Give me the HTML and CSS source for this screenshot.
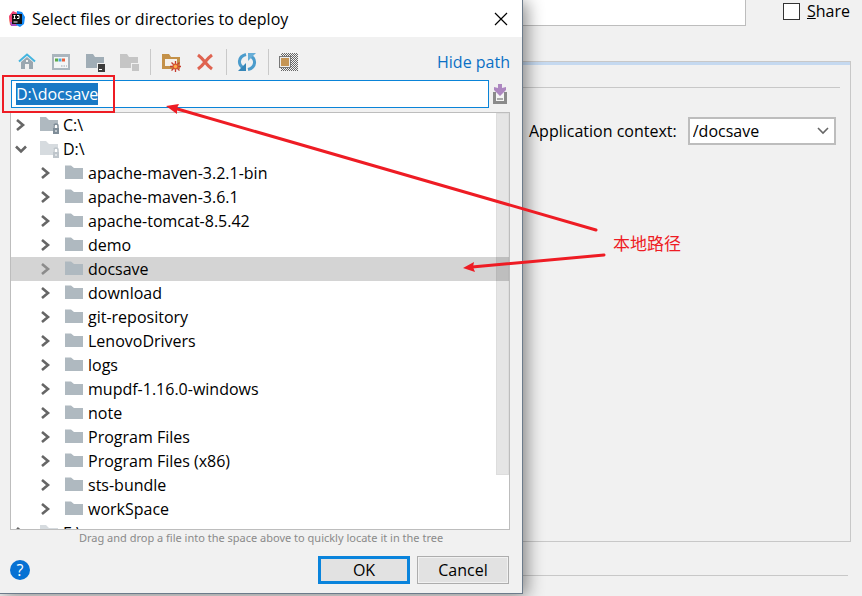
FILE: index.html
```html
<!DOCTYPE html>
<html lang="en">
<head>
<meta charset="utf-8">
<title>Select files or directories to deploy</title>
<link rel="stylesheet" href="styles.css">
</head>
<body>
<svg class="defs" aria-hidden="true">
  <symbol id="right" viewBox="0 0 12 14"><path d="M2 2l6 5-6 5" fill="none" stroke="currentColor" stroke-width="2.6"/></symbol>
  <symbol id="down" viewBox="0 0 12 14"><path d="M1 4.500l5 5 5-5" fill="none" stroke="currentColor" stroke-width="2.600"/></symbol>
  <symbol id="folder" viewBox="0 0 20 20"><path d="M0 2.500h6l3 2.500h9v11H0z" fill="#afb9c0"/></symbol>
  <symbol id="drive" viewBox="0 0 20 20"><path d="M0 2h6l3 3h9v5h-5v6H0z" fill="#afb9c0"/><path d="M14 13v-2q0-2 2-2t2 2v2" fill="none" stroke="#7f8d98" stroke-width="1.500"/><path d="M13 13h6v6h-6z" fill="#7f8d98"/><path d="M15.500 15h1v2h-1z" fill="#fff"/></symbol>
</svg>
<main class="screen">
  <section class="dialog" role="dialog" aria-labelledby="title">
    <header class="titlebar">
      <svg class="logo" viewBox="0 0 18 18" aria-hidden="true"><path d="M1 7l4-5 5 1-1 13-7-1z" fill="#f97a45"/><path d="M5 1l4 2-1 5-6 5-1-7z" fill="#ef4478"/><path d="M9 1l5 1 3 5-1 7-4 3-4-2z" fill="#168af5"/><path d="M2 12h4l3 4-6 0z" fill="#ad4fc5"/><path d="M4 4h10v10H4z" fill="#111"/><path d="M5.500 5.500h2M6.500 5.500v3M5.500 8.500h2M9 5.500h2v3H9M5.500 12h4" fill="none" stroke="#fff"/></svg>
      <h1 id="title">Select files or directories to deploy</h1>
      <button class="plain close" aria-label="Close"><svg viewBox="0 0 14 14"><path d="M1 1l12 12M13 1L1 13" stroke="#000" stroke-width="1.200"/></svg></button>
    </header>
    <div class="toolbar">
      <button class="plain tool" aria-label="Home"><svg viewBox="0 0 20 20"><path d="M4 10l6-5 6 5v7h-4v-5H8v5H4z" fill="#9aa7b0"/><path d="M2 9.500l8-7 8 7" fill="none" stroke="#45b5df" stroke-width="2"/><path d="M9 8h2v2H9z" fill="#f1f1f1"/></svg></button>
      <button class="plain tool" aria-label="Project directory"><svg viewBox="0 0 20 20"><path d="M1 2h18v16H1z" fill="#aab5bd"/><path d="M3 5h14v11H3z" fill="#f4f5f6"/><path d="M4 6.500h3v3H4z" fill="#5cab49"/><path d="M7.500 6.500h3v3h-3z" fill="#4eaadb"/><path d="M11 6.500h3v3h-3z" fill="#e9603b"/><path d="M10 14h1.500M12.500 14H14M15 14h1" stroke="#9aa7b0"/></svg></button>
      <button class="plain tool" aria-label="Module directory"><svg viewBox="0 0 20 20"><path d="M1 2h7l2 3h9v6h-7v5H1z" fill="#a0adb6"/><path d="M13 12h7v8h-7z" fill="#3c3c3c"/><path d="M14 17h3v1h-3z" fill="#fff"/></svg></button>
      <button class="plain tool" aria-label="Content root" disabled><svg viewBox="0 0 20 20"><path d="M1 2h7l2 3h9v6h-7v5H1z" fill="#c5c5c5"/><path d="M13 12h7v7h-7z" fill="#c5c5c5"/></svg></button>
      <span class="divider"></span>
      <button class="plain tool" aria-label="New folder"><svg viewBox="0 0 20 20"><path d="M1 2h7l2 3h9v12H1z" fill="#c49148"/><path d="M4 7h12v7H4z" fill="#f5f1eb"/><path d="M14.500 9v11M9 14.500h11M10.500 10.500l8 8M18.500 10.500l-8 8" stroke="#c63b2d" stroke-width="1.300"/><circle cx="14.500" cy="14.500" r="3" fill="#d65a31"/><circle cx="14.500" cy="14.500" r="1.700" fill="#ffad4c"/></svg></button>
      <button class="plain tool" aria-label="Delete"><svg viewBox="0 0 20 20"><path d="M3 3q4 3 7 7t7 7M17 3q-4 3-7 7t-7 7" fill="none" stroke="#df6350" stroke-width="3"/></svg></button>
      <span class="divider"></span>
      <button class="plain tool" aria-label="Refresh"><svg viewBox="0 0 20 20"><path d="M7 16Q2 14 2.500 9T9 2.500M13 4q5 2 4.500 7T11 17.500" fill="none" stroke="#4c9ccc" stroke-width="3"/><path d="M11 1h8l-8 8z" fill="#68aed7"/><path d="M9 19H1l8-8z" fill="#3686b8"/></svg></button>
      <span class="divider"></span>
      <button class="plain tool" aria-label="Show hidden files"><svg viewBox="0 0 20 20"><defs><pattern id="dots" width="2" height="2" patternUnits="userSpaceOnUse"><path d="M0 0h1v1H0zM1 1h1v1H1z" fill="#666"/></pattern></defs><path d="M2 1h17v18H2z" fill="url(#dots)"/><path d="M0 4h12v12H0z" fill="#777"/><path d="M1 5h10v10H1z" fill="#eee"/><path d="M2 6h8v8H2z" fill="#c59555"/></svg></button>
      <a class="hide" href="#path">Hide path</a>
    </div>
    <div class="pathrow">
      <input id="path" class="path" type="text" value="D:\docsave" aria-label="Path" spellcheck="false" autofocus>
      <button class="plain history" aria-label="Path history"><svg viewBox="0 0 16 22"><path d="M1 9h3v9h8V9h3v12H1z" fill="#8b8b8b"/><path d="M4 9h8v9H4z" fill="#f5f5f5"/><path d="M5 15h6v2H5z" fill="#aaa"/><path d="M6 1h4v4l4-1v3l-6 6-6-6V4l4 1z" fill="#ad87c0"/></svg></button>
    </div>
    <div class="treebox">
      <ul class="tree" role="tree"></ul>
      <span class="thumb"></span>
    </div>
    <p class="hint">Drag and drop a file into the space above to quickly locate it in the tree</p>
    <footer class="actions">
      <button class="plain help" aria-label="Help">?</button>
      <button class="btn primary">OK</button>
      <button class="btn">Cancel</button>
    </footer>
  </section>
  <section class="settings">
    <div class="namerow">
      <input class="name" type="text" aria-label="Name">
      <label class="share"><input type="checkbox"><span><u>S</u>hare</span></label>
    </div>
    <div class="panel">
      <hr>
      <div class="context">
        <label for="context">Application context:</label>
        <div class="combo">
          <select id="context"><option>/docsave</option></select>
          <svg viewBox="0 0 12 8" aria-hidden="true"><path d="M1 1l5 5 5-5" fill="none" stroke="#666" stroke-width="1.600"/></svg>
        </div>
      </div>
    </div>
    <hr class="endrule">
  </section>
</main>
<svg class="marks" viewBox="0 0 862 596" aria-hidden="true">
  <path d="M3 76h111v36H3z" fill="none" stroke="#ee1c24" stroke-width="2"/>
  <path d="M596 230L174 108M604 255L472 267" stroke="#ee1c24" stroke-width="3" stroke-linecap="round"/>
  <path d="M166 106l13-2-2 4 0 6zM463 268l11-6-1 5 2 5z" fill="#ee1c24"/>
</svg>
<span class="note" lang="zh-CN">本地路径</span>
<script src="tree.js"></script>
</body>
</html>
```

FILE: styles.css
```css
* { box-sizing: border-box; }
body {
  margin: 0;
  background: #f1f1f1;
  color: #000;
  font: 16px/20px "Open Sans", "Noto Sans CJK SC", sans-serif;
  overflow: hidden;
}
input, select, button { font: inherit; color: inherit; }
svg { display: block; }
.defs { position: absolute; width: 0; height: 0; }
.screen { display: flex; min-height: 100vh; }
.dialog {
  flex: 0 0 523px;
  display: flex;
  flex-direction: column;
  height: calc(100vh - 2px);
  background: #f1f1f1;
  border: solid #6c7b8b;
  border-width: 0 1px 1px 0;
  box-shadow: 4px 2px 16px rgba(0, 0, 0, .45);
  z-index: 1;
}
.plain { padding: 0; border: 0; background: none; flex: none; }
.titlebar {
  display: flex;
  align-items: center;
  height: 37px;
  padding: 0 14px 0 8px;
  background: #fff;
}
.logo { width: 18px; height: 18px; }
h1 { flex: 1; margin: 0 0 0 6px; font-size: 16px; font-weight: 400; }
.close svg { width: 14px; height: 14px; }
.toolbar {
  display: flex;
  align-items: center;
  height: 43px;
  padding: 7px 12px 0 17px;
  gap: 14px;
}
.tool svg { width: 20px; height: 20px; }
.divider { width: 1px; height: 26px; margin: 0 -4px 0 -3px; background: #c9c9c9; }
.hide { margin-left: auto; color: #0b70c5; text-decoration: none; }
.pathrow { display: flex; align-items: center; gap: 3px; padding: 0 14px 0 11px; height: 28px; }
.path {
  flex: 1;
  min-width: 0;
  height: 28px;
  padding: 3px 4px;
  border: 1px solid #0a84d8;
  outline: 0;
  background: #fff;
  line-height: 20px;
}
.path::selection { background: #1979c5; color: #fff; }
.history svg { width: 16px; height: 22px; }
.treebox {
  position: relative;
  flex: 1;
  min-height: 0;
  margin: 4px 12px 0 10px;
  overflow: hidden;
  border: 1px solid #bdbdbd;
  background: #fff;
}
.tree { margin: 0; padding: 0; list-style: none; }
.row { display: flex; align-items: center; height: 24px; padding-left: 4px; white-space: nowrap; }
.child { padding-left: 29px; }
.selected { background: #d4d4d4; }
.twisty { width: 12px; height: 14px; margin-right: 13px; color: #666; }
.selected .twisty { color: #8c8c8c; }
.icon { width: 20px; height: 20px; margin-right: 3px; }
.faded .icon { opacity: .5; }
.thumb {
  position: absolute;
  top: 0;
  right: 0;
  width: 13px;
  height: 87%;
  border: 1px solid rgba(0, 0, 0, .03);
  background: rgba(0, 0, 0, .1);
}
.hint {
  margin: 0;
  font: 11px/16px "Noto Sans", sans-serif;
  text-align: center;
  color: #8a8a8a;
}
.actions { display: flex; align-items: center; gap: 7px; padding: 10px 13px 9px 10px; }
.help {
  width: 20px;
  height: 20px;
  margin-right: auto;
  border-radius: 50%;
  background: #0671d3;
  color: #fff;
}
.btn {
  width: 92px;
  height: 28px;
  padding: 0;
  border: 1px solid #adadad;
  box-shadow: inset 0 0 0 1px #f1f1f1;
  background: #e2e2e2;
}
.primary { border: 3px solid #0a84dc; box-shadow: none; }
.settings { flex: 1; min-width: 0; display: flex; flex-direction: column; }
.namerow { display: flex; height: 26px; padding-right: 12px; }
.name { flex: 1; min-width: 0; border: solid #bdbdbd; border-width: 0 1px 1px 0; background: #fff; }
.share { display: flex; align-items: center; height: 22px; gap: 7px; margin-left: 37px; }
.share input { appearance: none; width: 17px; height: 17px; margin: 0; border: 1px solid #333; background: #fff; }
.panel {
  flex: 1;
  margin: 35px 11px 0 0;
  border: solid #c8c8c8;
  border-width: 1px 1px 1px 0;
}
.panel::before { content: ""; display: block; height: 3px; background: #c5d9f0; }
hr { height: 1px; margin: 0; border: 0; background: #c8c8c8; }
.panel hr { margin: 22px 10px 29px 0; }
.context { display: flex; align-items: center; gap: 11px; padding: 0 14px 0 6px; white-space: nowrap; }
.combo { position: relative; flex: 1; min-width: 0; }
.combo select {
  appearance: none;
  display: block;
  width: 100%;
  height: 28px;
  padding: 0 24px 0 3px;
  border: 2px solid #bdbdbd;
  border-radius: 0;
  background: #fff;
}
.combo svg { position: absolute; right: 7px; top: 10px; width: 12px; height: 8px; pointer-events: none; }
.settings .endrule { margin: 33px 14px 20px 0; }
.marks { position: absolute; z-index: 2; left: 0; top: 0; width: 862px; height: 596px; pointer-events: none; }
.note {
  position: absolute;
  z-index: 2;
  left: 613px;
  top: 231px;
  color: #ee1c24;
  font: 17px/24px "Noto Sans CJK SC", sans-serif;
}
```

FILE: tree.js
```js
const folders = [
  "apache-maven-3.2.1-bin", "apache-maven-3.6.1", "apache-tomcat-8.5.42", "demo",
  "docsave", "download", "git-repository", "LenovoDrivers", "logs",
  "mupdf-1.16.0-windows", "note", "Program Files", "Program Files (x86)",
  "sts-bundle", "workSpace"
];
const row = (name, classes, arrow, icon) =>
  `<li class="row ${classes}" role="treeitem"><svg class="twisty"><use href="#${arrow}"/></svg>` +
  `<svg class="icon"><use href="#${icon}"/></svg><span>${name}</span></li>`;
document.querySelector(".tree").innerHTML =
  row("C:\\", "", "right", "drive") +
  row("D:\\", "faded", "down", "drive") +
  folders.map(n => row(n, n === "docsave" ? "child selected" : "child", "right", "folder")).join("") +
  row("E:\\", "faded", "right", "drive");
const path = document.getElementById("path");
path.focus();
path.select();
```
